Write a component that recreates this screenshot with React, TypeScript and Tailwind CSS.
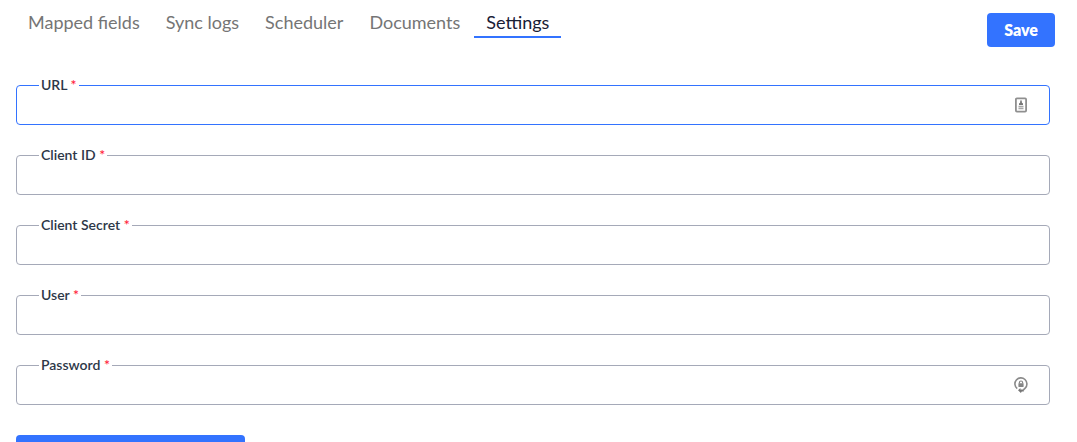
import React, { useState } from 'react';

interface Field {
  id: string;
  label: string;
  type: string;
  icon?: React.ReactNode;
}

const tabs = ['Mapped fields', 'Sync logs', 'Scheduler', 'Documents', 'Settings'];

const ContactIcon: React.FC = () => (
  <svg width="12" height="16" viewBox="0 0 12 16" fill="none" aria-hidden="true">
    <rect x="0.9" y="1.4" width="10.2" height="13.2" rx="1" stroke="#8f8f8f" strokeWidth="1.8" />
    <path d="M6 3.4v3" stroke="#777" strokeWidth="1.6" />
    <path d="M4 8V6.4L6 5l2 1.4V8z" fill="#777" />
    <path d="M3.5 9.5h5M3.5 11.5h5" stroke="#a8a8a8" strokeWidth="1.4" />
  </svg>
);

const LockIcon: React.FC = () => (
  <svg width="14" height="16" viewBox="0 0 14 16" fill="none" aria-hidden="true">
    <path d="M3.2 11.6A6 6 0 1 1 11.2 11.1L9.4 12.9" stroke="#8a8a8a" strokeWidth="1.6" />
    <path d="M5.4 6.6V5.6a1.6 1.6 0 0 1 3.2 0v1" stroke="#858585" strokeWidth="1.2" />
    <rect x="4.4" y="6.2" width="5.2" height="3.8" rx="0.4" fill="#858585" />
    <path d="M4 13.3l2.4-2.2v1.3h3.4v2H7.8L6.9 16z" fill="#777" />
  </svg>
);

const fields: Field[] = [
  { id: 'url', label: 'URL', type: 'text', icon: <ContactIcon /> },
  { id: 'client-id', label: 'Client ID', type: 'text' },
  { id: 'client-secret', label: 'Client Secret', type: 'text' },
  { id: 'user', label: 'User', type: 'text' },
  { id: 'password', label: 'Password', type: 'password', icon: <LockIcon /> },
];

const App: React.FC = () => {
  const [activeTab, setActiveTab] = useState('Settings');
  const [activeField, setActiveField] = useState('url');
  const [values, setValues] = useState<Record<string, string>>({});

  return (
    <div className="h-screen overflow-hidden bg-white font-['Lato',sans-serif]">
      {/* Tabs and save */}
      <header className="flex items-start justify-between pl-4 pr-[22px]">
        <nav className="flex gap-0.5 pt-2">
          {tabs.map(tab => (
            <button
              key={tab}
              type="button"
              onClick={() => setActiveTab(tab)}
              className={`border-b-2 px-3 text-lg leading-7 ${
                tab === activeTab ? 'border-[#3373ff] text-[#1a2035]' : 'border-transparent text-[#757575]'
              }`}
            >
              {tab}
            </button>
          ))}
        </nav>
        <button
          type="submit"
          form="settings-form"
          className="mt-[13px] h-[34px] rounded bg-[#3373ff] px-[17px] text-base font-extrabold text-white"
        >
          Save
        </button>
      </header>

      {/* Connection settings */}
      <form
        id="settings-form"
        onSubmit={e => e.preventDefault()}
        className="flex flex-col gap-[30px] pl-4 pr-[27px] pt-[38px]"
      >
        {fields.map(field => (
          <div key={field.id} className="relative">
            <label
              htmlFor={field.id}
              className="absolute -top-2 left-[23px] bg-white px-0.5 text-sm leading-4 font-semibold text-[#2d3748]"
            >
              {field.label} <span className="text-[#ff1f3d]">*</span>
            </label>
            <input
              id={field.id}
              type={field.type}
              value={values[field.id] ?? ''}
              onFocus={() => setActiveField(field.id)}
              onChange={e => setValues({ ...values, [field.id]: e.target.value })}
              className={`block h-10 w-full rounded border px-6 text-sm outline-none ${
                field.id === activeField ? 'border-[#3373ff]' : 'border-[#a5a9b8]'
              }`}
            />
            {field.icon && (
              <span className="pointer-events-none absolute inset-y-0 right-[22px] flex w-3.5 items-center justify-center">
                {field.icon}
              </span>
            )}
          </div>
        ))}
        <button type="button" aria-label="Test connection" className="h-10 w-[229px] rounded bg-[#3373ff]" />
      </form>
    </div>
  );
};

export default App;
